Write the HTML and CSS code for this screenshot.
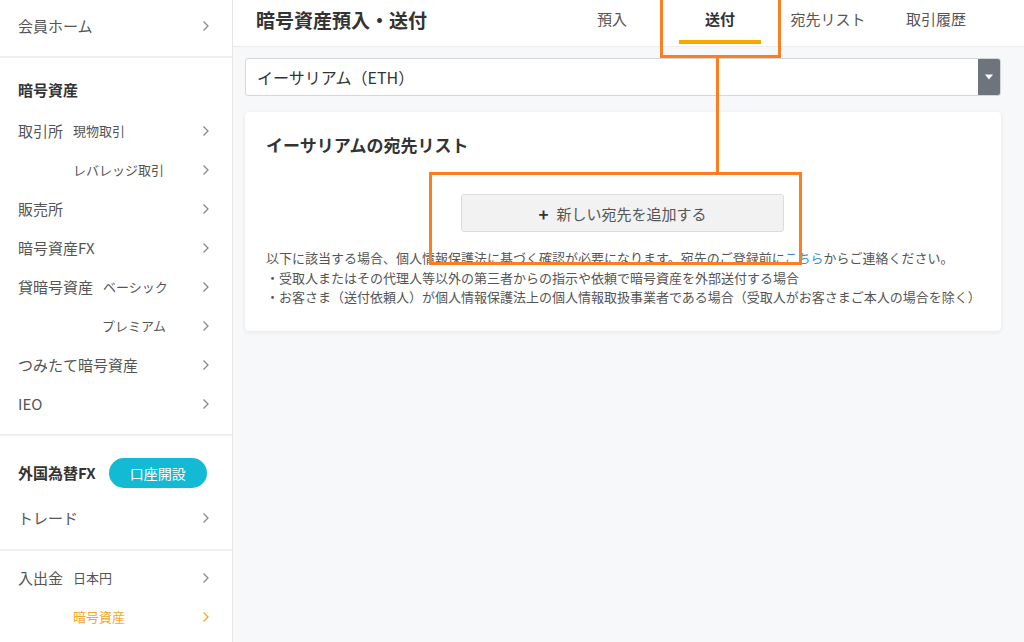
FILE: index.html
```html
<!DOCTYPE html>
<html lang="ja">
<head>
<meta charset="utf-8">
<title>暗号資産預入・送付</title>
<link rel="stylesheet" href="styles.css">
</head>
<body>
<div class="app">
  <aside class="sidebar">
    <div class="block block-home">
      <a class="row"><span class="label">会員ホーム</span><svg class="chev" viewBox="0 0 8 12"><polyline points="1.5,1.5 6,6 1.5,10.5"/></svg></a>
    </div>
    <div class="block block-crypto">
      <div class="heading">暗号資産</div>
      <a class="row"><span class="label">取引所</span><span class="sub">現物取引</span><svg class="chev" viewBox="0 0 8 12"><polyline points="1.5,1.5 6,6 1.5,10.5"/></svg></a>
      <a class="row indent-a"><span class="sub">レバレッジ取引</span><svg class="chev" viewBox="0 0 8 12"><polyline points="1.5,1.5 6,6 1.5,10.5"/></svg></a>
      <a class="row"><span class="label">販売所</span><svg class="chev" viewBox="0 0 8 12"><polyline points="1.5,1.5 6,6 1.5,10.5"/></svg></a>
      <a class="row"><span class="label">暗号資産FX</span><svg class="chev" viewBox="0 0 8 12"><polyline points="1.5,1.5 6,6 1.5,10.5"/></svg></a>
      <a class="row"><span class="label">貸暗号資産</span><span class="sub">ベーシック</span><svg class="chev" viewBox="0 0 8 12"><polyline points="1.5,1.5 6,6 1.5,10.5"/></svg></a>
      <a class="row indent-b"><span class="sub">プレミアム</span><svg class="chev" viewBox="0 0 8 12"><polyline points="1.5,1.5 6,6 1.5,10.5"/></svg></a>
      <a class="row"><span class="label">つみたて暗号資産</span><svg class="chev" viewBox="0 0 8 12"><polyline points="1.5,1.5 6,6 1.5,10.5"/></svg></a>
      <a class="row"><span class="label">IEO</span><svg class="chev" viewBox="0 0 8 12"><polyline points="1.5,1.5 6,6 1.5,10.5"/></svg></a>
    </div>
    <div class="block block-fx">
      <div class="heading heading-fx"><span>外国為替FX</span><span class="open-btn">口座開設</span></div>
      <a class="row"><span class="label">トレード</span><svg class="chev" viewBox="0 0 8 12"><polyline points="1.5,1.5 6,6 1.5,10.5"/></svg></a>
    </div>
    <div class="block block-funds">
      <a class="row"><span class="label">入出金</span><span class="sub">日本円</span><svg class="chev" viewBox="0 0 8 12"><polyline points="1.5,1.5 6,6 1.5,10.5"/></svg></a>
      <a class="row indent-a active"><span class="sub">暗号資産</span><svg class="chev" viewBox="0 0 8 12"><polyline points="1.5,1.5 6,6 1.5,10.5"/></svg></a>
    </div>
  </aside>

  <main class="main">
    <header class="topbar">
      <h1 class="title">暗号資産預入・送付</h1>
      <nav class="tabs">
        <a class="tab">預入</a>
        <a class="tab tab-active">送付</a>
        <a class="tab">宛先リスト</a>
        <a class="tab">取引履歴</a>
      </nav>
    </header>

    <div class="content">
      <div class="select">
        <span class="select-value">イーサリアム（ETH）</span>
        <span class="select-btn"><svg viewBox="0 0 10 8"><polygon points="1,1.5 9,1.5 5,6.5"/></svg></span>
      </div>

      <section class="card">
        <h2 class="card-title">イーサリアムの宛先リスト</h2>
        <div class="btn-wrap">
          <button class="add-btn"><span class="plus">+</span>新しい宛先を追加する</button>
        </div>
        <p class="notice">以下に該当する場合、個人情報保護法に基づく確認が必要になります。宛先のご登録前に<a class="link">こちら</a>からご連絡ください。<br>・受取人またはその代理人等以外の第三者からの指示や依頼で暗号資産を外部送付する場合<br>・お客さま（送付依頼人）が個人情報保護法上の個人情報取扱事業者である場合（受取人がお客さまご本人の場合を除く）</p>
      </section>
    </div>
  </main>
</div>

<div class="anno anno-tab"></div>
<div class="anno-line"></div>
<div class="anno anno-btn"></div>
</body>
</html>
```

FILE: styles.css
```css
* { box-sizing: border-box; }
html, body {
  margin: 0;
  padding: 0;
  width: 1024px;
  height: 642px;
  overflow: hidden;
  font-family: "Noto Sans CJK JP", "Noto Sans", sans-serif;
  color: #555;
  background: #f7f8fa;
}
.app {
  display: flex;
  height: 642px;
}
.sidebar {
  width: 233px;
  flex: none;
  background: #fff;
  border-right: 1px solid #e6e6e6;
  display: flex;
  flex-direction: column;
}
.block {
  border-bottom: 2px solid #f0f0f0;
  display: flex;
  flex-direction: column;
}
.block-home { padding: 6px 0 11px; }
.block-crypto { padding: 12px 0 11px; }
.block-fx { padding: 17px 0 12px; }
.block-funds { padding: 7px 0 0; border-bottom: none; }
.row {
  height: 39px;
  display: flex;
  align-items: center;
  padding: 0 22px 0 18px;
  font-size: 15px;
  color: #555;
  line-height: 1;
}
.row .label { margin-right: 10px; }
.row .sub { font-size: 13px; color: #555; }
.row.indent-a { padding-left: 73px; }
.row.indent-b { padding-left: 102px; }
.row.active .sub { color: #f5a623; }
.row.active .chev polyline { stroke: #f5a623; }
.chev {
  width: 8px;
  height: 12px;
  margin-left: auto;
}
.chev polyline {
  fill: none;
  stroke: #888;
  stroke-width: 1.3;
}
.heading {
  height: 39px;
  display: flex;
  align-items: center;
  padding-left: 18px;
  font-size: 15px;
  font-weight: bold;
  color: #333;
  margin-bottom: 2px;
}
.heading-fx { margin-bottom: 6px; }
.open-btn {
  margin-left: 13px;
  width: 98px;
  height: 30px;
  border-radius: 15px;
  background: #13bad4;
  color: #fff;
  font-size: 14px;
  font-weight: normal;
  display: flex;
  align-items: center;
  justify-content: center;
}

.main {
  flex: 1;
  display: flex;
  flex-direction: column;
}
.topbar {
  height: 47px;
  background: #fff;
  border-bottom: 1px solid #ececec;
  display: flex;
  align-items: center;
  padding-left: 23px;
}
.title {
  margin: 0;
  font-size: 19px;
  font-weight: bold;
  color: #333;
  line-height: 1;
  margin-top: -8px;
}
.tabs {
  display: flex;
  margin-left: auto;
  margin-right: 34px;
  height: 100%;
}
.tab {
  width: 108px;
  display: flex;
  align-items: center;
  justify-content: center;
  font-size: 15px;
  color: #555;
  position: relative;
  padding-bottom: 9px;
}
.tab-active {
  font-weight: bold;
  color: #333;
}
.tab-active::after {
  content: "";
  position: absolute;
  left: 13px;
  right: 13px;
  bottom: 2px;
  height: 4px;
  background: #f5a800;
}
.content {
  padding: 11px 23px 0 12px;
  display: flex;
  flex-direction: column;
  gap: 16px;
}
.select {
  height: 38px;
  background: #fff;
  border: 1px solid #d4d6d9;
  border-radius: 3px;
  display: flex;
  align-items: center;
  overflow: hidden;
}
.select-value {
  padding-left: 11px;
  font-size: 16px;
  color: #333;
}
.select-btn {
  margin-left: auto;
  width: 22px;
  height: 100%;
  background: #6e747c;
  display: flex;
  align-items: center;
  justify-content: center;
}
.select-btn svg { width: 10px; height: 8px; }
.select-btn polygon { fill: #fff; }
.card {
  background: #fff;
  border-radius: 4px;
  box-shadow: 0 1px 4px rgba(0,0,0,0.08);
  padding: 20px 22px 24px 21px;
}
.card-title {
  margin: 0;
  font-size: 17px;
  font-weight: bold;
  color: #333;
  line-height: 25px;
}
.btn-wrap {
  display: flex;
  justify-content: center;
  margin-top: 37px;
}
.add-btn {
  width: 323px;
  height: 38px;
  background: #f2f2f2;
  border: 1px solid #dcdcdc;
  border-radius: 3px;
  font-family: inherit;
  font-size: 15px;
  color: #555;
  display: flex;
  align-items: center;
  justify-content: center;
  padding: 0;
}
.plus {
  font-weight: bold;
  font-size: 17px;
  color: #333;
  margin-right: 8px;
  line-height: 1;
}
.notice {
  margin: 16px 0 0;
  font-size: 13px;
  line-height: 19.5px;
  color: #555;
}
.link { color: #3c8fd6; }

.anno {
  position: absolute;
  border: 3px solid #fb7f22;
}
.anno-tab {
  left: 660px;
  top: -4px;
  width: 121px;
  height: 62px;
}
.anno-line {
  position: absolute;
  left: 716px;
  top: 58px;
  width: 3px;
  height: 116px;
  background: #fb7f22;
}
.anno-btn {
  left: 429px;
  top: 172px;
  width: 373px;
  height: 93px;
}
```
